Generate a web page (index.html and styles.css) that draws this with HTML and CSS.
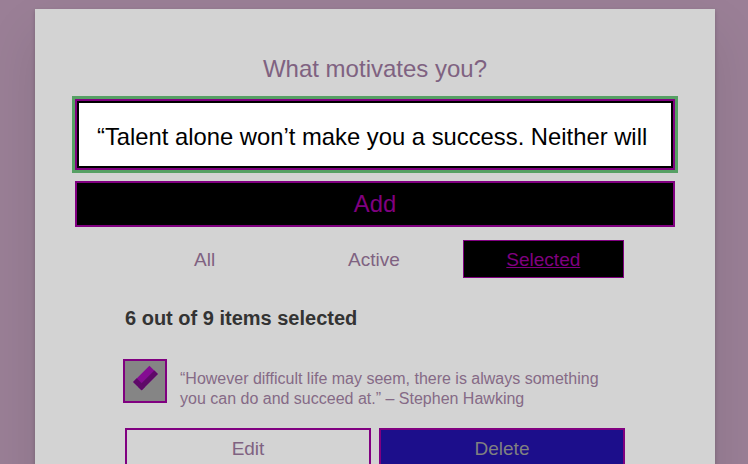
FILE: index.html
```html
<!DOCTYPE html>
<html lang="en">
<head>
<meta charset="utf-8">
<title>Todo</title>
<link rel="stylesheet" href="styles.css">
</head>
<body>
<div class="todoapp">
  <form class="form">
    <h2 class="label-wrapper"><label class="label-lg" for="new-todo">What motivates you?</label></h2>
    <input class="input-lg" id="new-todo" type="text" value="“Talent alone won’t make you a success. Neither will being in the right place at the right time, unless you are ready.”">
    <button type="button" class="btn-add">Add</button>
  </form>
  <div class="filters">
    <button type="button" class="filter">All</button>
    <button type="button" class="filter">Active</button>
    <button type="button" class="filter filter-on">Selected</button>
  </div>
  <h2 class="list-heading">6 out of 9 items selected</h2>
  <ul class="todo-list">
    <li class="todo">
      <div class="c-cb">
        <span class="cb-box"></span>
        <label class="todo-label">“However difficult life may seem, there is always something you can do and succeed at.” – Stephen Hawking</label>
      </div>
      <div class="btn-group">
        <button type="button" class="btn btn-edit">Edit</button>
        <button type="button" class="btn btn-delete">Delete</button>
      </div>
    </li>
  </ul>
</div>
</body>
</html>
```
FILE: styles.css
```css
html, body {
  margin: 0;
  padding: 0;
}
body {
  background: #9a7f96;
  font-family: "Liberation Sans", Arial, Helvetica, sans-serif;
  color: #333;
  height: 464px;
  overflow: hidden;
  padding-left: 2px;
}
.todoapp {
  box-sizing: border-box;
  width: 680px;
  margin: 9px auto 0;
  padding: 40px 40px 60px;
  background: #d3d3d3;
  box-shadow: 0 2px 4px 0 rgba(0, 0, 0, 0.2), 0 25px 50px 0 rgba(0, 0, 0, 0.1);
}
.form {
  display: flex;
  flex-direction: column;
  margin: 0;
}
.label-wrapper {
  margin: 0 0 10px;
  padding: 8px;
  text-align: center;
  font-size: 24px;
  line-height: 24px;
  font-weight: 300;
}
.label-lg {
  color: #7f6281;
}
.input-lg {
  box-sizing: border-box;
  width: 600px;
  height: 71px;
  margin: 0;
  padding: 22px 20px 18px;
  border: 2px solid #800080;
  box-shadow: inset 0 0 0 2px #000;
  outline: 3px solid #56a064;
  background: #fff;
  color: #000;
  font-family: inherit;
  font-size: 23.8px;
  line-height: 27px;
}
.btn-add {
  box-sizing: border-box;
  width: 600px;
  height: 46px;
  margin: 11px 0 0;
  padding: 0;
  border: 2px solid #800080;
  background: #000;
  color: #800080;
  font-family: inherit;
  font-size: 23.8px;
  line-height: 28px;
}
.filters {
  display: flex;
  gap: 8px;
  margin: 13px 51px 0 49px;
}
.filter {
  flex: 1 1 0;
  box-sizing: border-box;
  height: 38px;
  margin: 0;
  padding: 5px;
  border: 1px solid transparent;
  background: transparent;
  color: #7f6281;
  font-family: inherit;
  font-size: 19px;
  line-height: 25px;
}
.filter-on {
  background: #000;
  border-color: #800080;
  color: #800080;
  text-decoration: underline;
}
.list-heading {
  width: 500px;
  margin: 28px auto 0;
  font-size: 20px;
  line-height: 25px;
  font-weight: bold;
  color: #333;
}
.todo-list {
  list-style: none;
  width: 500px;
  margin: 30px auto 0;
  padding: 0;
}
.todo {
  display: flex;
  flex-direction: column;
  gap: 14px;
}
.c-cb {
  position: relative;
  min-height: 44px;
  padding-left: 40px;
}
.cb-box {
  position: absolute;
  top: -2px;
  left: -2px;
  box-sizing: border-box;
  width: 44px;
  height: 44px;
  border: 2px solid #800080;
  background: #858585;
}
.cb-box::after {
  content: "";
  position: absolute;
  top: 11px;
  left: 9px;
  width: 18px;
  height: 7px;
  border: solid #5e0a68;
  border-width: 0 0 5px 5px;
  background: #840c92;
  transform: rotate(-45deg);
}
.todo-label {
  display: block;
  padding: 8px 15px 5px;
  font-size: 16px;
  line-height: 20px;
  color: #856a86;
}
.btn-group {
  display: flex;
  gap: 8px;
}
.btn {
  flex: 1 1 0;
  box-sizing: border-box;
  margin: 0;
  padding: 7px 10px 7px;
  border: 2px solid #800080;
  font-family: inherit;
  font-size: 19px;
  line-height: 24px;
}
.btn-edit {
  background: transparent;
  color: #7f6281;
}
.btn-delete {
  background: #1c0e8b;
  color: #808080;
}
```
